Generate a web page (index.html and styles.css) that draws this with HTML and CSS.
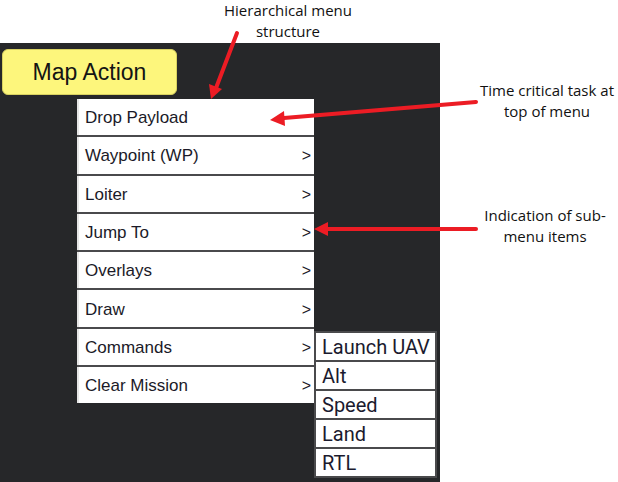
FILE: index.html
```html
<!DOCTYPE html>
<html lang="en">
<head>
    <meta charset="UTF-8">
    <title>Map Action Menu</title>
    <link rel="stylesheet" href="styles.css">
</head>
<body>
    <div class="stage">
        <div class="panel">
            <button class="map-btn">Map Action</button>

            <div class="menu">
                <div class="menu-item">Drop Payload</div>
                <div class="menu-item">Waypoint (WP)<span class="chev">&gt;</span></div>
                <div class="menu-item">Loiter<span class="chev">&gt;</span></div>
                <div class="menu-item">Jump To<span class="chev">&gt;</span></div>
                <div class="menu-item">Overlays<span class="chev">&gt;</span></div>
                <div class="menu-item">Draw<span class="chev">&gt;</span></div>
                <div class="menu-item">Commands<span class="chev">&gt;</span></div>
                <div class="menu-item">Clear Mission<span class="chev">&gt;</span></div>

                <!-- подменю Commands -->
                <div class="submenu">
                    <div class="sub-item">Launch UAV</div>
                    <div class="sub-item">Alt</div>
                    <div class="sub-item">Speed</div>
                    <div class="sub-item">Land</div>
                    <div class="sub-item">RTL</div>
                </div>
            </div>
        </div>

        <!-- подписи -->
        <div class="note note-top">Hierarchical menu<br>structure</div>
        <div class="note note-time">Time critical task at<br>top of menu</div>
        <div class="note note-sub">Indication of sub-<br>menu items</div>

        <svg class="arrows" width="618" height="482" viewBox="0 0 618 482">
            <g stroke="#ec1c24" stroke-width="4" fill="none" stroke-linecap="round">
                <line x1="237" y1="33" x2="216" y2="88"/>
                <line x1="476" y1="102" x2="284" y2="118"/>
                <line x1="476" y1="229" x2="327" y2="229"/>
            </g>
            <g fill="#ec1c24">
                <polygon points="211,99 209,84 222,89"/>
                <polygon points="270,120 284,111 285,126"/>
                <polygon points="314,229 328,222 328,236"/>
            </g>
        </svg>
    </div>
</body>
</html>
```

FILE: styles.css
```css
* {
    margin: 0;
    padding: 0;
    box-sizing: border-box;
}

body {
    background: #fff;
    font-family: 'Liberation Sans', Arial, sans-serif;
}

.stage {
    position: relative;
    width: 618px;
    height: 482px;
    overflow: hidden;
}

.panel {
    margin-top: 43px;
    width: 440px;
    height: 439px;
    background: #262729;
    padding: 6px 0 0 2px;
}

.map-btn {
    display: block;
    width: 175px;
    height: 46px;
    background: #fdf67c;
    border: 1px solid #d8d160;
    border-radius: 6px;
    font-family: 'Liberation Sans', Arial, sans-serif;
    font-size: 23px;
    color: #141414;
}

.menu {
    position: relative;
    margin: 4px 0 0 75px;
    width: 237px;
    display: flex;
    flex-direction: column;
    gap: 2px;
    background: #4a4a4c;
}

.menu-item {
    height: 36.3px;
    background: #fff;
    display: flex;
    align-items: center;
    justify-content: space-between;
    padding: 2px 3px 0 8px;
    font-size: 17px;
    color: #1b1a28;
    box-shadow: inset 2px 0 0 #e6e6e6;
}

.chev {
    font-size: 16px;
}

.submenu {
    position: absolute;
    left: 237px;
    top: 232px;
    width: 123px;
    background: #4a4a4c;
    padding: 2px;
    display: flex;
    flex-direction: column;
    gap: 2px;
}

.sub-item {
    height: 27px;
    background: #fff;
    padding-left: 6px;
    display: flex;
    align-items: center;
    font-family: Roboto, sans-serif;
    font-size: 20px;
    color: #1b1a2e;
}

.note {
    position: absolute;
    font-family: 'Open Sans', sans-serif;
    font-size: 15px;
    line-height: 21px;
    color: #111;
    text-align: center;
    white-space: nowrap;
}

.note-top {
    left: 208px;
    top: 0;
    width: 160px;
}

.note-time {
    left: 467px;
    top: 80px;
    width: 160px;
}

.note-sub {
    left: 465px;
    top: 205px;
    width: 160px;
}

.arrows {
    position: absolute;
    left: 0;
    top: 0;
}
```
